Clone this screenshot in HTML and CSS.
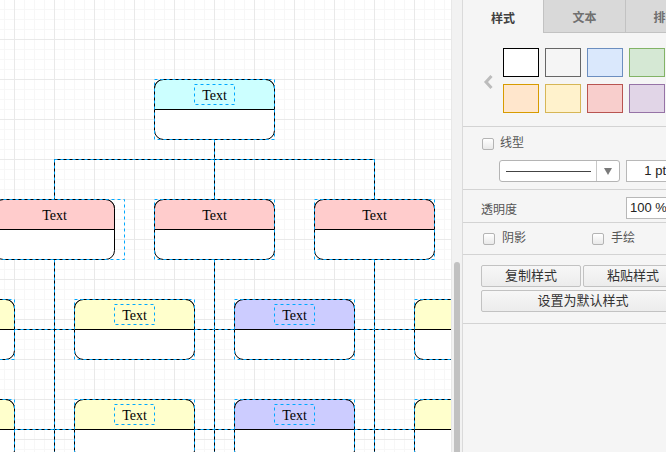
FILE: index.html
```html
<!DOCTYPE html>
<html lang="zh">
<head>
<meta charset="utf-8">
<title>Diagram</title>
<link rel="stylesheet" href="styles.css">
</head>
<body>
<div class="app">
  <div class="canvas">
    <svg width="451" height="452" viewBox="0 0 451 452">
      <defs>
        <pattern id="grid" x="14" y="39" width="40" height="40" patternUnits="userSpaceOnUse">
          <path class="g-minor" d="M10.5 0V40M20.5 0V40M30.5 0V40M0 10.5H40M0 20.5H40M0 30.5H40"/>
          <path class="g-major" d="M0.5 0V40M0 0.5H40"/>
        </pattern>
        <g id="node">
          <rect class="nb" x=".5" y=".5" width="120" height="60" rx="9"/>
        </g>
      </defs>
      <rect width="451" height="452" fill="#fff"/>
      <rect width="451" height="452" fill="url(#grid)"/>

      <path class="edge" d="M214.5 139.5V159.5M54.5 159.5H374.5M54.5 159.5V199.5M214.5 159.5V199.5M374.5 159.5V199.5M54.5 259.5V452M214.5 259.5V452M374.5 259.5V452M14.5 329.5H74.5M194.5 329.5H234.5M354.5 329.5H414.5M14.5 429.5H74.5M194.5 429.5H234.5M354.5 429.5H414.5"/>
      <path class="edge-sel" d="M214.5 139.5V159.5M54.5 159.5H374.5M54.5 159.5V199.5M214.5 159.5V199.5M374.5 159.5V199.5M54.5 259.5V452M214.5 259.5V452M374.5 259.5V452M14.5 329.5H74.5M194.5 329.5H234.5M354.5 329.5H414.5M14.5 429.5H74.5M194.5 429.5H234.5M354.5 429.5H414.5"/>

      <!-- row 1 -->
      <g transform="translate(154,79)">
        <use href="#node"/>
        <path class="nh" fill="#ccffff" d="M.5 30.5V9.5A9 9 0 0 1 9.5 .5H111.5A9 9 0 0 1 120.5 9.5V30.5Z"/>
        <text class="nt" x="60.5" y="21">Text</text>
        <rect class="ns" x=".5" y=".5" width="120" height="60"/>
        <rect class="ns" x="40.5" y="5.5" width="40" height="20"/>
      </g>

      <!-- row 2 -->
      <g transform="translate(-6,199)">
        <use href="#node"/>
        <path class="nh" fill="#ffcccc" d="M.5 30.5V9.5A9 9 0 0 1 9.5 .5H111.5A9 9 0 0 1 120.5 9.5V30.5Z"/>
        <text class="nt" x="60.5" y="21">Text</text>
        <rect class="ns" x="-14.5" y=".5" width="145" height="60"/>
      </g>
      <g transform="translate(154,199)">
        <use href="#node"/>
        <path class="nh" fill="#ffcccc" d="M.5 30.5V9.5A9 9 0 0 1 9.5 .5H111.5A9 9 0 0 1 120.5 9.5V30.5Z"/>
        <text class="nt" x="60.5" y="21">Text</text>
        <rect class="ns" x=".5" y=".5" width="120" height="60"/>
      </g>
      <g transform="translate(314,199)">
        <use href="#node"/>
        <path class="nh" fill="#ffcccc" d="M.5 30.5V9.5A9 9 0 0 1 9.5 .5H111.5A9 9 0 0 1 120.5 9.5V30.5Z"/>
        <text class="nt" x="60.5" y="21">Text</text>
        <rect class="ns" x=".5" y=".5" width="120" height="60"/>
      </g>

      <!-- row 3 -->
      <g transform="translate(-106,299)">
        <use href="#node"/>
        <path class="nh" fill="#ffffcc" d="M.5 30.5V9.5A9 9 0 0 1 9.5 .5H111.5A9 9 0 0 1 120.5 9.5V30.5Z"/>
        <rect class="ns" x=".5" y=".5" width="120" height="60"/>
      </g>
      <g transform="translate(74,299)">
        <use href="#node"/>
        <path class="nh" fill="#ffffcc" d="M.5 30.5V9.5A9 9 0 0 1 9.5 .5H111.5A9 9 0 0 1 120.5 9.5V30.5Z"/>
        <text class="nt" x="60.5" y="21">Text</text>
        <rect class="ns" x=".5" y=".5" width="120" height="60"/>
        <rect class="ns" x="40.5" y="5.5" width="40" height="20"/>
      </g>
      <g transform="translate(234,299)">
        <use href="#node"/>
        <path class="nh" fill="#ccccff" d="M.5 30.5V9.5A9 9 0 0 1 9.5 .5H111.5A9 9 0 0 1 120.5 9.5V30.5Z"/>
        <text class="nt" x="60.5" y="21">Text</text>
        <rect class="ns" x=".5" y=".5" width="120" height="60"/>
        <rect class="ns" x="40.5" y="5.5" width="40" height="20"/>
      </g>
      <g transform="translate(414,299)">
        <use href="#node"/>
        <path class="nh" fill="#ffffcc" d="M.5 30.5V9.5A9 9 0 0 1 9.5 .5H111.5A9 9 0 0 1 120.5 9.5V30.5Z"/>
        <rect class="ns" x=".5" y=".5" width="120" height="60"/>
      </g>

      <!-- row 4 -->
      <g transform="translate(-106,399)">
        <use href="#node"/>
        <path class="nh" fill="#ffffcc" d="M.5 30.5V9.5A9 9 0 0 1 9.5 .5H111.5A9 9 0 0 1 120.5 9.5V30.5Z"/>
        <rect class="ns" x=".5" y=".5" width="120" height="60"/>
      </g>
      <g transform="translate(74,399)">
        <use href="#node"/>
        <path class="nh" fill="#ffffcc" d="M.5 30.5V9.5A9 9 0 0 1 9.5 .5H111.5A9 9 0 0 1 120.5 9.5V30.5Z"/>
        <text class="nt" x="60.5" y="21">Text</text>
        <rect class="ns" x=".5" y=".5" width="120" height="60"/>
        <rect class="ns" x="40.5" y="5.5" width="40" height="20"/>
      </g>
      <g transform="translate(234,399)">
        <use href="#node"/>
        <path class="nh" fill="#ccccff" d="M.5 30.5V9.5A9 9 0 0 1 9.5 .5H111.5A9 9 0 0 1 120.5 9.5V30.5Z"/>
        <text class="nt" x="60.5" y="21">Text</text>
        <rect class="ns" x=".5" y=".5" width="120" height="60"/>
        <rect class="ns" x="40.5" y="5.5" width="40" height="20"/>
      </g>
      <g transform="translate(414,399)">
        <use href="#node"/>
        <path class="nh" fill="#ffffcc" d="M.5 30.5V9.5A9 9 0 0 1 9.5 .5H111.5A9 9 0 0 1 120.5 9.5V30.5Z"/>
        <rect class="ns" x=".5" y=".5" width="120" height="60"/>
      </g>
    </svg>
  </div>

  <div class="track"><div class="thumb"></div></div>

  <div class="panel">
    <div class="tabs">
      <div class="tab active">样式</div>
      <div class="tab mid">文本</div>
      <div class="tab">排列</div>
    </div>

    <div class="sec sec-swatch">
      <svg class="chev" width="20" height="66" viewBox="0 0 20 66"><polyline points="8.5,28 3,34 8.5,40"/></svg>
      <div class="swatches">
        <span class="sw" style="background:#ffffff;border-color:#000000"></span>
        <span class="sw" style="background:#f5f5f5;border-color:#666666"></span>
        <span class="sw" style="background:#dae8fc;border-color:#6c8ebf"></span>
        <span class="sw" style="background:#d5e8d4;border-color:#82b366"></span>
        <span class="sw" style="background:#ffe6cc;border-color:#d79b00"></span>
        <span class="sw" style="background:#fff2cc;border-color:#d6b656"></span>
        <span class="sw" style="background:#f8cecc;border-color:#b85450"></span>
        <span class="sw" style="background:#e1d5e7;border-color:#9673a6"></span>
      </div>
    </div>

    <div class="sec sec-line">
      <div class="check"><span class="box"></span><span>线型</span></div>
      <div class="line-row">
        <div class="linestyle"><span class="ls-line"><span class="ls-stroke"></span></span><span class="ls-arrow"><span class="tri"></span></span></div>
        <div class="field pt">1 pt</div>
      </div>
    </div>

    <div class="sec sec-opacity">
      <span class="op-label">透明度</span>
      <div class="field pct">100 %</div>
    </div>

    <div class="sec sec-checks">
      <div class="check first"><span class="box"></span><span>阴影</span></div>
      <div class="check"><span class="box"></span><span>手绘</span></div>
    </div>

    <div class="sec sec-buttons">
      <div class="btn-row">
        <button class="btn">复制样式</button>
        <button class="btn">粘贴样式</button>
      </div>
      <button class="btn wide">设置为默认样式</button>
    </div>
  </div>
</div>
</body>
</html>
```

FILE: styles.css
```css
html, body {
  margin: 0;
  padding: 0;
  width: 666px;
  height: 452px;
  overflow: hidden;
  font-family: "Liberation Sans", "Noto Sans CJK SC", sans-serif;
}

.app {
  display: flex;
  height: 452px;
}

.canvas {
  width: 451px;
  height: 452px;
  flex: none;
  overflow: hidden;
  background: #fff;
}

.canvas svg { display: block; }

.g-minor { fill: none; stroke: #f7f7f7; }
.g-major { fill: none; stroke: #e9e9e9; }

.edge { fill: none; stroke: #000; }
.edge-sel { fill: none; stroke: #00a8ff; stroke-dasharray: 3 3; }

.nb { fill: #fff; stroke: #000; }
.nh { stroke: #000; }
.nt {
  font-family: "Liberation Serif", serif;
  font-size: 14px;
  text-anchor: middle;
  fill: #000;
}
.ns { fill: none; stroke: #00a8ff; stroke-dasharray: 3 3; }

.track {
  width: 11px;
  flex: none;
  box-sizing: border-box;
  background: #f2f2f2;
  border-left: 1px solid #e8e8e8;
  padding-left: 2px;
}

.thumb {
  margin-top: 262px;
  width: 6px;
  height: 200px;
  background: #c1c1c1;
  border-radius: 3px;
}

.panel {
  width: 240px;
  flex: none;
  box-sizing: border-box;
  border-left: 1px solid #dadada;
  background: #f5f5f5;
  color: #555;
  font-size: 12px;
}

.tabs {
  display: flex;
  height: 33px;
}

.tab {
  width: 80px;
  flex: none;
  box-sizing: border-box;
  display: flex;
  align-items: center;
  justify-content: center;
  padding-top: 1px;
  font-size: 12px;
  font-weight: bold;
  color: #707070;
  background: #d9d9d9;
  border-left: 1px solid #c2c2c2;
  border-bottom: 1px solid #c2c2c2;
  white-space: nowrap;
  overflow: hidden;
}

.tab.mid { width: 82px; }

.tab.active {
  background: transparent;
  border: none;
  color: #404040;
}

.sec {
  box-sizing: border-box;
  border-bottom: 1px solid #d3d3d3;
}

.sec-swatch {
  height: 94px;
  display: flex;
  align-items: flex-start;
  padding: 15px 0 0 20px;
}

.chev { flex: none; }
.chev polyline {
  fill: none;
  stroke: #bcbcbc;
  stroke-width: 3;
}

.swatches {
  display: grid;
  grid-template-columns: repeat(4, 36px);
  grid-auto-rows: 29px;
  gap: 7px 6px;
}

.sw {
  display: block;
  box-sizing: border-box;
  border: 1px solid;
}

.check {
  display: flex;
  align-items: center;
  gap: 6px;
  color: #555;
  line-height: 17px;
}

.box {
  width: 12px;
  height: 12px;
  box-sizing: border-box;
  border: 1px solid #b4b4b4;
  border-radius: 2px;
  background: linear-gradient(#ffffff, #e9e9e9);
  flex: none;
}

.sec-line {
  height: 63px;
  padding: 8px 0 0 19px;
}

.line-row {
  display: flex;
  gap: 6px;
  margin: 8px 0 0 17px;
}

.linestyle {
  width: 121px;
  height: 22px;
  box-sizing: border-box;
  border: 1px solid #b4b4b4;
  border-radius: 3px;
  background: #fff;
  display: flex;
}

.ls-line {
  width: 97px;
  box-sizing: border-box;
  display: flex;
  align-items: center;
  padding: 0 5px 0 6px;
  border-right: 1px solid #c8c8c8;
}

.ls-stroke {
  display: block;
  width: 100%;
  height: 1px;
  background: #444;
}

.ls-arrow {
  flex: 1;
  display: flex;
  align-items: center;
  justify-content: center;
}

.tri {
  width: 0;
  height: 0;
  border-left: 4px solid transparent;
  border-right: 4px solid transparent;
  border-top: 7px solid #7a7a7a;
}

.field {
  height: 22px;
  box-sizing: border-box;
  border: 1px solid #b8b8b8;
  background: #fff;
  color: #222;
  font-size: 13px;
  line-height: 20px;
  flex: none;
}

.field.pt {
  width: 46px;
  text-align: right;
  padding-right: 5px;
  white-space: nowrap;
}

.sec-opacity {
  height: 33px;
  display: flex;
  align-items: center;
  padding: 4px 0 0 18px;
}

.op-label {
  width: 145px;
  flex: none;
}

.field.pct {
  width: 48px;
  padding-left: 3px;
  white-space: nowrap;
}

.sec-checks {
  height: 32px;
  display: flex;
  align-items: center;
  padding-left: 20px;
}

.sec-checks .check { gap: 7px; }
.sec-checks .check.first { width: 109px; flex: none; }

.sec-buttons {
  height: 69px;
  padding: 10px 0 0 18px;
}

.btn-row {
  display: flex;
  gap: 2px;
  margin-bottom: 3px;
}

.btn {
  display: block;
  width: 100px;
  height: 22px;
  box-sizing: border-box;
  margin: 0;
  padding: 0;
  border: 1px solid #c2c2c2;
  border-radius: 2px;
  background: linear-gradient(#f7f7f7, #ececec);
  color: #333;
  font-family: "Liberation Sans", "Noto Sans CJK SC", sans-serif;
  font-size: 13px;
  line-height: 20px;
  flex: none;
}

.btn.wide { width: 204px; }
```
